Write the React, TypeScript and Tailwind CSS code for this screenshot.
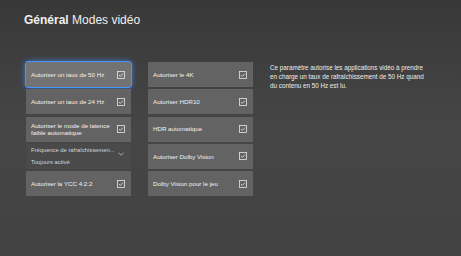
import { type FC } from "react";

type Item = { label: string[]; focused?: boolean };

const leftItems: Item[] = [
  { label: ["Autoriser un taux de 50 Hz"], focused: true },
  { label: ["Autoriser un taux de 24 Hz"] },
  { label: ["Autoriser le mode de latence", "faible automatique"] },
];

const rightItems: Item[] = [
  { label: ["Autoriser le 4K"] },
  { label: ["Autoriser HDR10"] },
  { label: ["HDR automatique"] },
  { label: ["Autoriser Dolby Vision"] },
  { label: ["Dolby Vision pour le jeu"] },
];

const CheckBox: FC = () => (
  <svg width="8" height="8" viewBox="0 0 8 8" className="shrink-0">
    <rect x="0.5" y="0.5" width="7" height="7" fill="none" stroke="#e6e6e6" strokeWidth="0.8" />
    <path d="M2 4.1 L3.4 5.4 L6 2.6" fill="none" stroke="#e6e6e6" strokeWidth="0.8" />
  </svg>
);

const Toggle: FC<Item> = ({ label, focused }) => (
  <div
    className={
      focused
        ? "h-[25px] flex items-center justify-between pl-[5px] pr-[6px] bg-[#737373] rounded-[2px] outline outline-[1.5px] outline-[#4a94ff] shadow-[0_0_6px_#3d8bff]"
        : "h-[25px] flex items-center justify-between pl-[5px] pr-[6px] bg-[#636363]"
    }
  >
    <div className="text-[6.2px] leading-[7.5px] text-[#f2f2f2]">
      {label.map((l) => (
        <div key={l}>{l}</div>
      ))}
    </div>
    <CheckBox />
  </div>
);

export default function App() {
  return (
    <div
      className="w-[461px] h-[256px] overflow-hidden bg-gradient-to-b from-[#383838] via-[#464646] to-[#424242] pl-[24px] pt-[12px]"
      style={{ fontFamily: '"Liberation Sans", Arial, sans-serif' }}
    >
      {/* titre */}
      <div className="text-[12px] leading-[16px] text-[#f0f0f0]">
        <span className="font-bold">Général</span> Modes vidéo
      </div>

      <div className="flex mt-[34px] pl-[2px]">
        {/* colonne gauche */}
        <div className="w-[105px] flex flex-col gap-[2.25px]">
          {leftItems.map((it) => (
            <Toggle key={it.label[0]} {...it} />
          ))}
          <div className="h-[25px] flex items-center justify-between pl-[5px] pr-[7px] bg-[#4a4a4a]">
            <div className="text-[5.8px] leading-[12px] text-[#d6d6d6] whitespace-nowrap">
              <div>Fréquence de rafraîchissemen...</div>
              <div>Toujours activé</div>
            </div>
            <svg width="6" height="4" viewBox="0 0 6 4" className="shrink-0 mb-[4px]">
              <path d="M0.5 0.8 L3 3.2 L5.5 0.8" fill="none" stroke="#d6d6d6" strokeWidth="0.7" />
            </svg>
          </div>
          <Toggle label={["Autoriser la YCC 4:2:2"]} />
        </div>

        {/* colonne droite */}
        <div className="w-[105px] ml-[17px] flex flex-col gap-[2.25px]">
          {rightItems.map((it) => (
            <Toggle key={it.label[0]} {...it} />
          ))}
        </div>

        {/* description */}
        <div className="ml-[17px] mt-[1px] text-[6.3px] leading-[9px] text-[#eeeeee] whitespace-nowrap">
          Ce paramètre autorise les applications vidéo à prendre
          <br />
          en charge un taux de rafraîchissement de 50 Hz quand
          <br />
          du contenu en 50 Hz est lu.
        </div>
      </div>
    </div>
  );
}
